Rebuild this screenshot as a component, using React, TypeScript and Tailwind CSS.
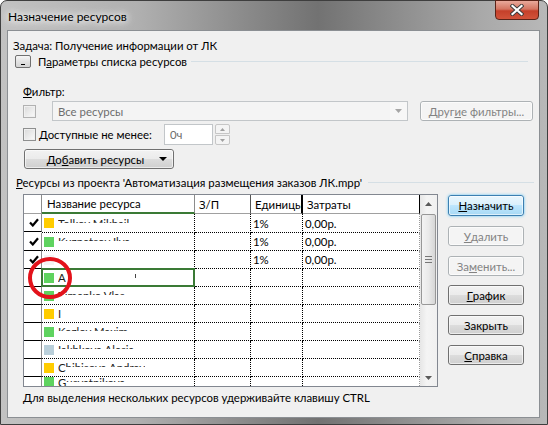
import React from "react"

type Row = {
  color: string
  check?: boolean
  full?: string
  frag?: string
  units?: string
  cost?: string
  selected?: boolean
}

const rows: Row[] = [
  { color: "#ffcc00", check: true, frag: "Tolkov   Mikhail", units: "1%", cost: "0,00р." },
  { color: "#5fd35f", check: true, frag: "Kuznetsov Ilya", units: "1%", cost: "0,00р." },
  { color: "#f4f4f4", check: true, frag: "", units: "1%", cost: "0,00р." },
  { color: "#5fd35f", full: "A", frag: "", selected: true },
  { color: "#5fd35f", frag: "Zimenko Vlas" },
  { color: "#ffcc00", full: "I", frag: "" },
  { color: "#5fd35f", frag: "Kozlov Maxim" },
  { color: "#b9cfda", frag: "Iakhkova Alesia" },
  { color: "#ffcc00", full: "C", frag: "hibisova Andrey" },
  { color: "#5fd35f", full: "G", frag: "usyatnikova" },
]

function Check() {
  return (
    <svg width="10" height="9" viewBox="0 0 10 9">
      <path d="M1 4.5 L3.8 7.5 L9 1.2" fill="none" stroke="#000" strokeWidth="2.2" />
    </svg>
  )
}

function CheckBox({ dim }: { dim?: boolean }) {
  return (
    <div
      className={
        "w-[13px] h-[13px] border shrink-0 p-px " +
        (dim ? "border-[#b1b1b1]" : "border-[#8e8f8f]")
      }
    >
      <div className="w-full h-full bg-[linear-gradient(135deg,#dcdcdc,#f8f8f8)]" />
    </div>
  )
}

function Btn({
  children,
  disabled,
  focus,
  className = "",
}: {
  children: React.ReactNode
  disabled?: boolean
  focus?: boolean
  className?: string
}) {
  let look =
    "border-[#707070] bg-[linear-gradient(180deg,#f2f2f2_0%,#ebebeb_49%,#dddddd_50%,#cfcfcf_100%)] text-black"
  if (disabled) look = "border-[#adb2b5] bg-[#f4f4f4] text-[#838383]"
  if (focus)
    look =
      "border-[#3c7fb1] bg-[linear-gradient(180deg,#eaf6fd_0%,#d9f0fc_49%,#bee6fd_50%,#a7d9f5_100%)] text-black shadow-[0_0_3px_#5ec4f5]"
  return (
    <div
      className={
        "flex items-center justify-center rounded-[3px] border " + look + " " + className
      }
    >
      <div className="flex items-center justify-center w-full h-full rounded-[2px] border border-white/60">
        {children}
      </div>
    </div>
  )
}

function GridRow({ r, first, last }: { r: Row; first: boolean; last: boolean }) {
  const h = first ? "h-[19px]" : last ? "h-[11px] overflow-hidden" : "h-[18px]"
  return (
    <div className={"flex shrink-0 " + h}>
      <div className="w-[18px] h-[18px] shrink-0 flex items-center justify-center pl-[2px] bg-white border-b border-b-black border-r border-r-[#8c8c8c]">
        {r.check && <Check />}
      </div>
      <div className="relative w-[153px] h-full flex items-center bg-white border-b border-dotted border-b-black border-r border-r-black">
        <div className="ml-[2px] w-[10px] h-[10px] shrink-0" style={{ background: r.color }} />
        <div className="ml-[4px] flex items-start h-[15px] overflow-hidden">
          {r.full && <span className="leading-[15px] text-[#1a1a1a]">{r.full}</span>}
          {r.frag && (
            <span className="h-[7px] overflow-hidden leading-[15px] whitespace-nowrap text-[#222]">
              {r.frag}
            </span>
          )}
        </div>
        {r.selected && (
          <>
            <span className="absolute left-[93px] top-[5px] w-px h-[4px] bg-[#444]" />
            <div className="absolute -left-px -top-px -right-px -bottom-px border-2 border-[#3a7a35]" />
          </>
        )}
      </div>
      <div className="w-[56px] h-full bg-white border-b border-r border-dotted border-black" />
      <div className="w-[52px] h-full flex items-center pl-[2px] bg-white border-b border-r border-dotted border-black">
        {r.units}
      </div>
      <div className="w-[117px] h-full flex items-center pl-[2px] bg-white border-b border-dotted border-b-black border-r border-r-[#9a9a9a]">
        {r.cost}
      </div>
    </div>
  )
}

function Scrollbar() {
  return (
    <div className="w-[17px] h-full flex flex-col items-center bg-[linear-gradient(90deg,#e6e6e6,#f4f4f4_40%,#f0f0f0)]">
      <div className="h-[17px] w-full flex items-center justify-center">
        <svg width="7" height="4" viewBox="0 0 7 4">
          <path d="M0 4 L3.5 0 L7 4 Z" fill="#5a5a5a" />
        </svg>
      </div>
      <div className="mt-[2px] w-[15px] h-[91px] rounded-[2px] border border-[#979797] bg-[linear-gradient(90deg,#f3f3f3,#e9e9e9_50%,#d6d6d6)] flex flex-col items-center justify-center gap-[2px]">
        <div className="w-[7px] h-px bg-[#777]" />
        <div className="w-[7px] h-px bg-[#777]" />
        <div className="w-[7px] h-px bg-[#777]" />
      </div>
      <div className="flex-1" />
      <div className="h-[17px] w-full flex items-center justify-center">
        <svg width="7" height="4" viewBox="0 0 7 4">
          <path d="M0 0 L3.5 4 L7 0 Z" fill="#5a5a5a" />
        </svg>
      </div>
    </div>
  )
}

function ResourceGrid() {
  return (
    <div className="w-[415px] h-[193px] border border-[#828790] flex bg-white overflow-hidden">
      <div className="flex flex-col w-[396px] h-full overflow-hidden">
        <div className="flex h-[19px] shrink-0 bg-white">
          <div className="w-[18px] h-full border-b border-b-[#a0a0a0] border-r border-r-[#8c8c8c]" />
          <div className="w-[153px] h-full flex items-center pl-[5px] border-b-2 border-b-[#3a7a35] border-r border-r-[#8c8c8c]">
            Название ресурса
          </div>
          <div className="w-[56px] h-full flex items-center pl-[4px] border-b border-b-[#a0a0a0] border-r border-r-[#555]">
            З/П
          </div>
          <div className="w-[52px] h-full flex items-center pl-[4px] overflow-hidden whitespace-nowrap border-b border-b-[#a0a0a0] border-r-2 border-r-black">
            Единицы
          </div>
          <div className="w-[117px] h-full flex items-center pl-[4px] border-b border-b-[#a0a0a0] border-r border-r-black">
            Затраты
          </div>
        </div>
        {rows.map((r, i) => (
          <GridRow key={i} r={r} first={i === 0} last={i === rows.length - 1} />
        ))}
      </div>
      <Scrollbar />
    </div>
  )
}

export default function App() {
  return (
    <div className="relative w-[548px] h-[425px] overflow-hidden bg-white font-['Lato',sans-serif] text-[11.4px] leading-[15px] text-black">
      <div className="flex flex-col w-full h-full rounded-t-[7px] border border-[#3e3e3e] bg-[linear-gradient(90deg,#c2c2c2_0%,#b0b0b0_25%,#8a8a8a_45%,#727272_58%,#8c8c8c_72%,#a9a9a9_88%,#b8b8b8_100%)]">
        {/* title bar */}
        <div className="h-[29px] shrink-0 flex items-start">
          <div className="ml-[7px] mt-[8px] text-[12px] [text-shadow:0_0_6px_#fff,0_0_10px_#fff,0_0_14px_#fff]">
            Назначение ресурсов
          </div>
          <div className="ml-auto mr-[8px] -mt-px w-[44px] h-[20px] rounded-b-[4px] border border-[#5a2318] bg-[linear-gradient(180deg,#e9a99b_0%,#d47561_45%,#c5402a_55%,#d2533a_100%)] flex items-center justify-center">
            <svg width="14" height="12" viewBox="0 0 14 12">
              <path d="M2.5 2 L11.5 10 M11.5 2 L2.5 10" stroke="#3b3b3b" strokeWidth="4" strokeLinecap="square" />
              <path d="M2.5 2 L11.5 10 M11.5 2 L2.5 10" stroke="#fff" strokeWidth="2.2" strokeLinecap="square" />
            </svg>
          </div>
        </div>

        {/* client area */}
        <div className="flex-1 ml-[6px] mr-[7px] mb-[6px] border border-[#8b8f93] bg-[#f0f0f0] flex flex-col">
          <div className="ml-[5px] mt-[7px]">Задача: Получение информации от ЛК</div>

          <div className="mt-[2px] h-[13px] flex items-center">
            <div className="ml-[7px] w-[16px] h-[13px] rounded-[2px] border border-[#707070] bg-[linear-gradient(180deg,#f6f6f6,#e3e3e3_50%,#d4d4d4)] flex items-end justify-center pb-[2px]">
              <div className="w-[4px] h-px bg-black" />
            </div>
            <div className="ml-[7px] whitespace-nowrap">
              П<span className="underline">а</span>раметры списка ресурсов
            </div>
            <div className="flex-1 ml-[4px] mr-[11px] h-px bg-[#d5dfe5]" />
          </div>

          <div className="ml-[15px] mt-[16px]">
            <span className="underline">Ф</span>ильтр:
          </div>

          <div className="mt-[2px] h-[20px] flex items-center">
            <div className="ml-[15px]">
              <CheckBox dim />
            </div>
            <div className="ml-[16px] w-[356px] h-[20px] border border-[#c2c6c9] bg-[#f4f4f4] flex items-center">
              <div className="ml-[5px] text-[#6d6d6d] flex-1">Все ресурсы</div>
              <div className="w-[17px] h-full flex items-center justify-center bg-[#f7f7f7]">
                <svg width="7" height="4" viewBox="0 0 7 4">
                  <path d="M0 0 L3.5 4 L7 0 Z" fill="#a6a6a6" />
                </svg>
              </div>
            </div>
            <Btn disabled className="ml-[12px] w-[113px] h-[20px]">
              Друг<span className="underline">и</span>е фильтры...
            </Btn>
          </div>

          <div className="mt-[3px] h-[21px] flex items-center">
            <div className="ml-[15px]">
              <CheckBox />
            </div>
            <div className="ml-[3px] w-[125px] whitespace-nowrap">
              <span className="underline">Д</span>оступные не менее:
            </div>
            <div className="w-[49px] h-[21px] border border-[#c2c6c9] bg-white flex items-center">
              <span className="ml-[5px] text-[#6d6d6d]">0ч</span>
            </div>
            <div className="ml-[2px] w-[15px] h-[21px] flex flex-col gap-px">
              <div className="flex-1 border border-[#c6c6c6] rounded-t-[2px] bg-[#f4f4f4] flex items-center justify-center">
                <svg width="5" height="3" viewBox="0 0 5 3">
                  <path d="M0 3 L2.5 0 L5 3 Z" fill="#a0a0a0" />
                </svg>
              </div>
              <div className="flex-1 border border-[#c6c6c6] rounded-b-[2px] bg-[#f4f4f4] flex items-center justify-center">
                <svg width="5" height="3" viewBox="0 0 5 3">
                  <path d="M0 0 L2.5 3 L5 0 Z" fill="#a0a0a0" />
                </svg>
              </div>
            </div>
          </div>

          <Btn className="mt-[4px] ml-[16px] w-[150px] h-[20px]">
            <div className="flex-1 text-center pl-[6px]">
              До<span className="underline">б</span>авить ресурсы
            </div>
            <svg className="mr-[5px]" width="8" height="4" viewBox="0 0 8 4">
              <path d="M0 0 L4 4 L8 0 Z" fill="#000" />
            </svg>
          </Btn>

          <div className="mt-[6px] h-[15px] flex items-center">
            <div className="ml-[8px] whitespace-nowrap">
              <span className="underline">Р</span>есурсы из проекта 'Автоматизация размещения заказов ЛК.mpp'
            </div>
            <div className="flex-1 ml-[6px] mr-[5px] h-px bg-[#d5dfe5]" />
          </div>

          <div className="mt-[4px] flex items-start">
            <div className="ml-[15px]">
              <ResourceGrid />
            </div>
            <div className="ml-[10px] w-[76px] flex flex-col">
              <Btn focus className="mt-[1px] h-[21px]">
                <span className="underline">Н</span>азначить
              </Btn>
              <Btn disabled className="mt-[10px] h-[20px]">
                <span className="underline">У</span>далить
              </Btn>
              <Btn disabled className="mt-[10px] h-[20px]">
                За<span className="underline">м</span>енить...
              </Btn>
              <Btn className="mt-[9px] h-[20px]">
                <span className="underline">Г</span>рафик
              </Btn>
              <Btn className="mt-[10px] h-[20px]">Закрыть</Btn>
              <Btn className="mt-[10px] h-[20px]">
                <span className="underline">С</span>правка
              </Btn>
            </div>
          </div>

          <div className="ml-[15px] mt-[3px]">
            Для выделения нескольких ресурсов удерживайте клавишу CTRL
          </div>
        </div>
      </div>

      {/* red annotation circle */}
      <svg className="absolute left-[27px] top-[256px]" width="46" height="44" viewBox="0 0 46 44">
        <ellipse cx="23" cy="22" rx="20" ry="19" fill="none" stroke="#e3121b" strokeWidth="4" />
      </svg>
    </div>
  )
}
